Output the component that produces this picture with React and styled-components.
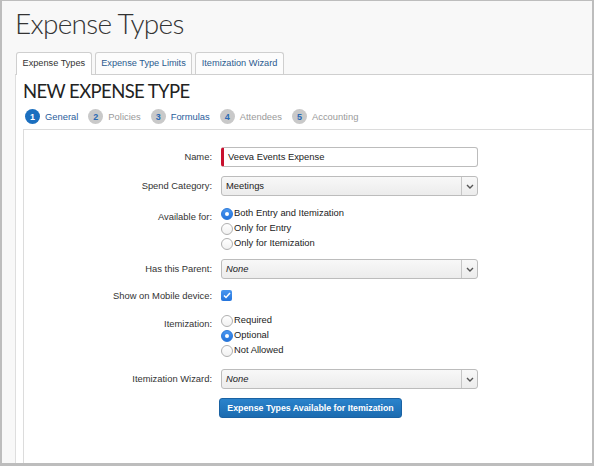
import React from "react";
import styled, { createGlobalStyle } from "styled-components";

const GlobalStyle = createGlobalStyle`
  html, body {
    margin: 0;
    padding: 0;
    background: #fff;
  }
  * {
    box-sizing: border-box;
  }
`;

const Frame = styled.div`
  width: 594px;
  height: 466px;
  overflow: hidden;
  display: flex;
  flex-direction: column;
  background: #f8f8f8;
  border-style: solid;
  border-color: #bdbdbd;
  border-width: 1px 2px 3px 2px;
  padding-left: 13px;
  font-family: "Liberation Sans", Arial, sans-serif;
  font-size: 9.4px;
  color: #333;
`;

const Title = styled.h1`
  margin: 5px 0 12px 0;
  font-family: Lato, "Liberation Sans", sans-serif;
  font-weight: 300;
  font-size: 28px;
  line-height: 34px;
  letter-spacing: -0.7px;
  color: #333;
`;

const TabBar = styled.div`
  display: flex;
  align-items: flex-end;
  gap: 3px;
  margin-left: 1px;
  position: relative;
  z-index: 1;
`;

const Tab = styled.div`
  height: ${(p) => (p.$active ? "23px" : "22px")};
  margin-bottom: ${(p) => (p.$active ? "-1px" : "0")};
  padding: 0 5.5px;
  border: 1px solid #cfcfcf;
  border-bottom: none;
  border-radius: 3px 3px 0 0;
  background: ${(p) => (p.$active ? "#fff" : "#fcfcfc")};
  color: ${(p) => (p.$active ? "#333" : "#2b5b8f")};
  font-size: 9.2px;
  line-height: 20px;
  white-space: nowrap;
`;

const Panel = styled.div`
  flex: 1;
  display: flex;
  flex-direction: column;
  background: #fff;
  border-top: 1px solid #cfcfcf;
  border-left: 1px solid #dedede;
  padding: 4px 0 0 7px;
`;

const Heading = styled.h2`
  margin: 0;
  font-family: Lato, "Liberation Sans", sans-serif;
  font-weight: 400;
  font-size: 18.5px;
  line-height: 24px;
  letter-spacing: -0.6px;
  color: #222;
`;

const Steps = styled.div`
  display: flex;
  align-items: center;
  gap: 10px;
  height: 15px;
  margin: 6px 0 5px 2px;
`;

const Step = styled.div`
  display: flex;
  align-items: center;
  gap: 5px;
  color: ${(p) => (p.$link ? "#2a5d9c" : "#9a9a9a")};
`;

const StepNumber = styled.span`
  width: 15px;
  height: 15px;
  border-radius: 50%;
  display: flex;
  align-items: center;
  justify-content: center;
  background: ${(p) => (p.$active ? "#1b6fbf" : "#c9c9c9")};
  color: ${(p) => (p.$active ? "#fff" : "#2a6ab5")};
  font-size: 9px;
  font-weight: bold;
`;

const StepBox = styled.div`
  flex: 1;
  border-top: 1px solid #dcdcdc;
  border-left: 1px solid #dcdcdc;
  padding-top: 17px;
`;

const Form = styled.div`
  display: grid;
  grid-template-columns: 188px 257px;
  column-gap: 9px;
  row-gap: 9px;
`;

const Label = styled.div`
  text-align: right;
  white-space: nowrap;
  line-height: ${(p) => p.$line || 20}px;
  margin-top: ${(p) => p.$shift || 0}px;
`;

const Field = styled.div`
  margin-top: ${(p) => p.$shift || 0}px;
`;

const TextInput = styled.div`
  height: 20px;
  border: 1px solid #bcbcbc;
  border-left: 3px solid #c8102e;
  border-radius: 3px;
  background: #fff;
  padding-left: 4px;
  line-height: 18px;
  color: #222;
`;

const Select = styled.div`
  height: 20px;
  display: flex;
  border: 1px solid #bcbcbc;
  border-radius: 3px;
  background: linear-gradient(#f8f8f8, #ececec);
  color: #222;
`;

const SelectValue = styled.div`
  flex: 1;
  padding-left: 4px;
  line-height: 18px;
  font-style: ${(p) => (p.$empty ? "italic" : "normal")};
`;

const SelectArrow = styled.div`
  width: 16px;
  border-left: 1px solid #c6c6c6;
  display: flex;
  align-items: center;
  justify-content: center;
`;

const RadioGroup = styled.div`
  display: flex;
  flex-direction: column;
`;

const RadioOption = styled.div`
  display: flex;
  align-items: center;
  height: 15px;
  color: #222;
`;

const RadioDot = styled.span`
  width: 12px;
  height: 12px;
  margin: 2px 1px 0 0;
  border-radius: 50%;
  flex-shrink: 0;
  display: flex;
  align-items: center;
  justify-content: center;
  border: 1px solid ${(p) => (p.$checked ? "#2b78d8" : "#b0b0b0")};
  background: ${(p) =>
    p.$checked ? "linear-gradient(#4a97f0, #2474dc)" : "linear-gradient(#fff, #f1f1f1)"};

  &::after {
    content: "";
    display: ${(p) => (p.$checked ? "block" : "none")};
    width: 4px;
    height: 4px;
    border-radius: 50%;
    background: #fff;
  }
`;

const Checkbox = styled.span`
  display: flex;
  align-items: center;
  justify-content: center;
  width: 11px;
  height: 11px;
  margin-top: 2px;
  border-radius: 2px;
  background: linear-gradient(#4a97f0, #2474dc);
`;

const ActionButton = styled.button`
  width: 183px;
  height: 20px;
  margin-left: -2px;
  padding: 0;
  border: 1px solid #1a62a3;
  border-radius: 3px;
  background: linear-gradient(#2a83cc, #1b6bb0);
  color: #fff;
  font-family: "Liberation Sans", Arial, sans-serif;
  font-size: 8.8px;
  font-weight: bold;
  white-space: nowrap;
  cursor: pointer;
`;

const Chevron = () => (
  <svg width="8" height="5" viewBox="0 0 8 5">
    <polyline points="1,1 4,4 7,1" fill="none" stroke="#555" strokeWidth="1.4" />
  </svg>
);

const Check = () => (
  <svg width="8" height="7" viewBox="0 0 8 7">
    <polyline points="1,3.5 3,5.5 7,1" fill="none" stroke="#fff" strokeWidth="1.5" />
  </svg>
);

function Dropdown({ value, empty }) {
  return (
    <Select>
      <SelectValue $empty={empty}>{value}</SelectValue>
      <SelectArrow>
        <Chevron />
      </SelectArrow>
    </Select>
  );
}

function Radios({ options, checked }) {
  return (
    <RadioGroup>
      {options.map((o) => (
        <RadioOption key={o}>
          <RadioDot $checked={o === checked} />
          {o}
        </RadioOption>
      ))}
    </RadioGroup>
  );
}

const tabs = ["Expense Types", "Expense Type Limits", "Itemization Wizard"];

const steps = [
  { n: 1, label: "General", link: true, active: true },
  { n: 2, label: "Policies" },
  { n: 3, label: "Formulas", link: true },
  { n: 4, label: "Attendees" },
  { n: 5, label: "Accounting" },
];

export default function App() {
  return (
    <>
      <GlobalStyle />
      <Frame>
        <Title>Expense Types</Title>
        <TabBar>
          {tabs.map((t, i) => (
            <Tab key={t} $active={i === 0}>
              {t}
            </Tab>
          ))}
        </TabBar>
        <Panel>
          <Heading>NEW EXPENSE TYPE</Heading>
          <Steps>
            {steps.map((s) => (
              <Step key={s.n} $link={s.link}>
                <StepNumber $active={s.active}>{s.n}</StepNumber>
                {s.label}
              </Step>
            ))}
          </Steps>
          <StepBox>
            <Form>
              <Label>Name:</Label>
              <TextInput>Veeva Events Expense</TextInput>

              <Label>Spend Category:</Label>
              <Dropdown value="Meetings" />

              <Label $shift={2}>Available for:</Label>
              <Radios
                options={["Both Entry and Itemization", "Only for Entry", "Only for Itemization"]}
                checked="Both Entry and Itemization"
              />

              <Label>Has this Parent:</Label>
              <Dropdown value="None" empty />

              <Label $line={15}>Show on Mobile device:</Label>
              <Field>
                <Checkbox>
                  <Check />
                </Checkbox>
              </Field>

              <Label $shift={2}>Itemization:</Label>
              <Radios options={["Required", "Optional", "Not Allowed"]} checked="Optional" />

              <Label $shift={3}>Itemization Wizard:</Label>
              <Field $shift={3}>
                <Dropdown value="None" empty />
              </Field>

              <div />
              <Field>
                <ActionButton>Expense Types Available for Itemization</ActionButton>
              </Field>
            </Form>
          </StepBox>
        </Panel>
      </Frame>
    </>
  );
}
